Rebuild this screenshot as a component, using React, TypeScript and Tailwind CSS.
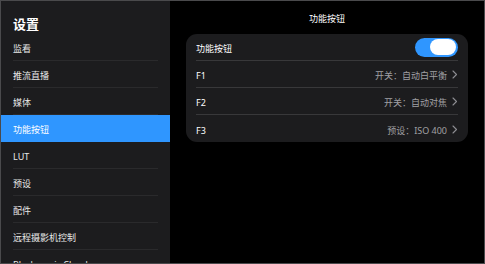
const menu = ["监看", "推流直播", "媒体", "功能按钮", "LUT", "预设", "配件", "远程摄影机控制", "Blackmagic Cloud"];

const rows = [
  { label: "F1", value: "开关：自动白平衡" },
  { label: "F2", value: "开关：自动对焦" },
  { label: "F3", value: "预设：ISO 400" },
];

function Chevron() {
  return (
    <svg width="6" height="9" viewBox="0 0 6 9" fill="none" className="ml-[5px] -mt-[3px]">
      <path d="M1 1l3.5 3.5L1 8" stroke="#8e8e93" strokeWidth="1.1" strokeLinecap="round" strokeLinejoin="round" />
    </svg>
  );
}

export default function App() {
  return (
    <div
      className="flex h-[264px] w-[485px] overflow-hidden border border-[#4a4a4c] bg-black text-[9px] text-[#e8e8e8]"
      style={{ fontFamily: '"Noto Sans", "Noto Sans CJK SC", sans-serif' }}
    >
      <aside className="flex w-[169px] shrink-0 flex-col overflow-hidden bg-[#1c1c1e]">
        <h1 className="flex h-[33px] shrink-0 items-end px-[12px] text-[13px] font-bold text-white">设置</h1>
        <ul className="flex shrink-0 flex-col">
          {menu.map((m) => {
            const active = m === "功能按钮";
            return (
              <li
                key={m}
                className={
                  active
                    ? "flex h-[27px] shrink-0 items-center bg-[#2f96ff] px-[12px] text-white"
                    : "flex h-[27px] shrink-0 items-center px-[12px]"
                }
              >
                <span
                  className={
                    active
                      ? "flex h-full w-full items-center pt-[3px]"
                      : "flex h-full w-full items-center border-b border-[#2a2a2c] pt-[3px]"
                  }
                >
                  {m}
                </span>
              </li>
            );
          })}
        </ul>
      </aside>
      <main className="flex flex-1 flex-col px-[16px]">
        <h2 className="flex h-[33px] shrink-0 items-center justify-center pt-[2px] text-white">功能按钮</h2>
        <div className="rounded-[11px] bg-[#1c1c1e] px-[10px]">
          <div className="flex h-[27px] items-center justify-between border-b border-[#38383a]">
            <span className="pt-[4px] text-white">功能按钮</span>
            <span className="flex h-[19px] w-[43px] items-center justify-end rounded-full bg-[#2f96ff] px-[2px]">
              <span className="h-[16px] w-[26px] rounded-full bg-white" />
            </span>
          </div>
          {rows.map((r, i) => (
            <div
              key={r.label}
              className={
                i < rows.length - 1
                  ? "flex h-[27px] items-center justify-between border-b border-[#38383a] pt-[4px]"
                  : "flex h-[27px] items-center justify-between pt-[4px]"
              }
            >
              <span className="text-white">{r.label}</span>
              <span className="flex items-center text-[#a0a0a4]">
                {r.value}
                <Chevron />
              </span>
            </div>
          ))}
        </div>
      </main>
    </div>
  );
}
